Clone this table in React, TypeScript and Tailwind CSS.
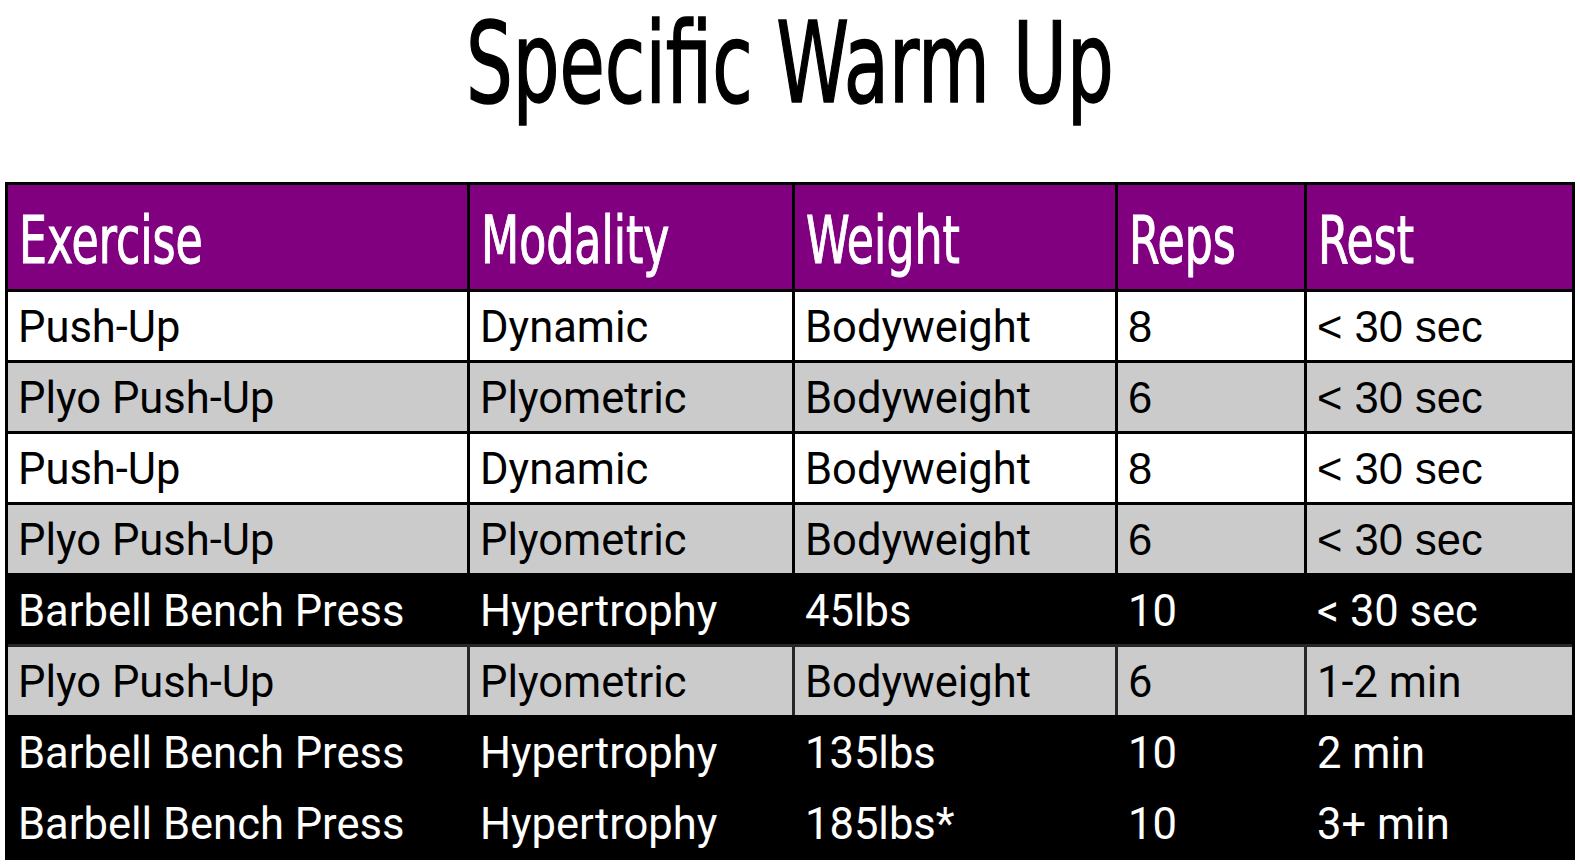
import React from "react"

type Tone = "white" | "gray" | "black"

interface Row {
  cells: string[]
  tone: Tone
  arialTail?: boolean
}

const HEADERS = ["Exercise", "Modality", "Weight", "Reps", "Rest"]

const ROWS: Row[] = [
  { cells: ["Push-Up", "Dynamic", "Bodyweight", "8", "< 30 sec"], tone: "white", arialTail: true },
  { cells: ["Plyo Push-Up", "Plyometric", "Bodyweight", "6", "< 30 sec"], tone: "gray", arialTail: true },
  { cells: ["Push-Up", "Dynamic", "Bodyweight", "8", "< 30 sec"], tone: "white", arialTail: true },
  { cells: ["Plyo Push-Up", "Plyometric", "Bodyweight", "6", "< 30 sec"], tone: "gray", arialTail: true },
  { cells: ["Barbell Bench Press", "Hypertrophy", "45lbs", "10", "< 30 sec"], tone: "black" },
  { cells: ["Plyo Push-Up", "Plyometric", "Bodyweight", "6", "1-2 min"], tone: "gray" },
  { cells: ["Barbell Bench Press", "Hypertrophy", "135lbs", "10", "2 min"], tone: "black" },
  { cells: ["Barbell Bench Press", "Hypertrophy", "185lbs*", "10", "3+ min"], tone: "black" },
]

const TONE_CLASS: Record<Tone, string> = {
  white: "bg-white text-black",
  gray: "bg-[#cbcbcb] text-black",
  black: "bg-black text-white",
}

const COLS = "grid grid-cols-[459px_325px_323px_189px_268px]"

export default function App() {
  return (
    <div className="min-h-screen w-[1580px] bg-white">
      {/* Title */}
      <div className="flex h-[182px] justify-center pt-[7px]">
        <h1 className="origin-center scale-x-[0.725] font-['DejaVu_Sans_Condensed','DejaVu_Sans',sans-serif] text-[113px] leading-[113px] text-black [-webkit-text-stroke:1.5px_black]">
          Specific Warm Up
        </h1>
      </div>

      {/* Table */}
      <div className="ml-[5px] w-[1570px] border-[3px] border-black">
        <div className={`${COLS} h-[104px] bg-[#800080] text-white`}>
          {HEADERS.map((h, i) => (
            <div
              key={h}
              className={`flex items-center pl-[11px] pt-[8px] ${i > 0 ? "border-l-[3px] border-black" : ""}`}
            >
              <span className="inline-block origin-left scale-x-[0.745] font-['DejaVu_Sans_Condensed','DejaVu_Sans',sans-serif] text-[66px] leading-none [-webkit-text-stroke:1px_white]">
                {h}
              </span>
            </div>
          ))}
        </div>

        {ROWS.map((row, r) => {
          const afterBlack = r > 0 && ROWS[r - 1].tone === "black" && row.tone !== "black"
          return (
            <div
              key={r}
              className={`${COLS} h-[71px] border-t-[3px] ${afterBlack ? "border-[#262626]" : "border-black"} ${TONE_CLASS[row.tone]}`}
            >
              {row.cells.map((c, i) => (
                <div
                  key={i}
                  className={`flex items-center pl-[10px] pt-[3px] text-[43.5px] leading-none ${
                    row.arialTail && i >= 3
                      ? "font-['Liberation_Sans',Arial,sans-serif]"
                      : "font-['Roboto',sans-serif]"
                  } ${i > 0 ? `border-l-[3px] ${afterBlack ? "border-[#262626]" : "border-black"}` : ""}`}
                >
                  {c}
                </div>
              ))}
            </div>
          )
        })}
      </div>
    </div>
  )
}
